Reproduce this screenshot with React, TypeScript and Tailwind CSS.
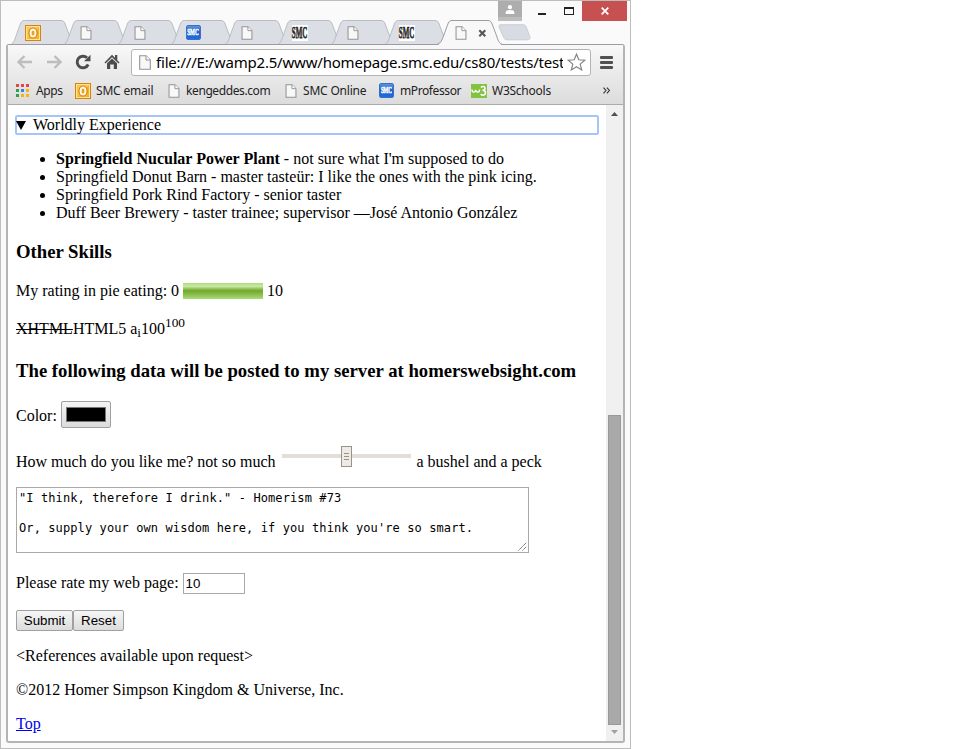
import React from "react";

type TabKind = "outlook" | "page" | "smcBlue" | "smcText";

function PageIcon({ w = 12, h = 15 }: { w?: number; h?: number }) {
  return (
    <svg width={w} height={h} viewBox="0 0 12 15" className="shrink-0">
      <path d="M.7.7H7L11.3 5v9.3H.7z" fill="#f8f8f8" stroke="#929292" strokeWidth="1.1" />
      <path d="M7 .7V5h4.3" fill="#fff" stroke="#929292" strokeWidth="1" />
    </svg>
  );
}

function OutlookIcon() {
  return (
    <svg width="16" height="16" viewBox="0 0 16 16" className="shrink-0">
      <rect x=".5" y=".5" width="15" height="15" fill="#f3b61d" stroke="#d9820f" />
      <rect x="1.5" y="1.5" width="13" height="13" fill="none" stroke="#fbe3a0" />
      <path d="M2 2h12L2 14z" fill="#fcd860" opacity=".6" />
      <ellipse cx="8" cy="8" rx="2.8" ry="3.700" fill="#e79a1a" stroke="#d9780a" strokeWidth="3.600" />
      <ellipse cx="8" cy="8" rx="2.500" ry="3.500" fill="#e8a020" stroke="#fff8e4" strokeWidth="2" />
    </svg>
  );
}

function SmcBlueIcon() {
  return (
    <div className="flex h-[15px] w-[15px] shrink-0 items-center justify-center rounded-[2px] border border-[#3c6fc4] bg-gradient-to-b from-[#5b93e0] via-[#1d5fc9] to-[#1b6fe0]">
      <span className="scale-x-[.58] font-['Liberation_Serif',serif] text-[9px] leading-none font-bold text-white [-webkit-text-stroke:0.5px_white]">SMC</span>
    </div>
  );
}

function SmcTextIcon() {
  return (
    <div className="flex h-4 w-4 shrink-0 items-center justify-center bg-white">
      <span className="scale-x-[.5] scale-y-[1.25] font-['Liberation_Serif',serif] text-[14px] leading-none font-bold text-[#2a2a2a] [-webkit-text-stroke:0.6px_#2a2a2a]">SMC</span>
    </div>
  );
}

function W3Icon() {
  return (
    <svg width="16" height="14" viewBox="0 0 16 14" className="shrink-0">
      <rect width="16" height="14" fill="#82c341" />
      <path d="M1 5.5c0 3.5 3.5 3.5 3.6.3.1 3.2 4 3.2 4-.3" fill="none" stroke="#fff" strokeWidth="1.4" />
      <path d="M10 3.5c1.2-1.6 4-1.2 4 .8 0 1.5-1.2 2-2.5 2 1.7 0 3 .7 3 2.5 0 2.5-3.2 3.2-4.7 1.2" fill="none" stroke="#fff" strokeWidth="1.6" />
    </svg>
  );
}

function TabIcon({ kind }: { kind: TabKind }) {
  if (kind === "outlook") return <OutlookIcon />;
  if (kind === "smcBlue") return <SmcBlueIcon />;
  if (kind === "smcText") return <SmcTextIcon />;
  return <PageIcon w={12} h={14} />;
}

const TABS: TabKind[] = ["outlook", "page", "page", "smcBlue", "page", "smcText", "page", "smcText"];

function TabStrip() {
  return (
    <div className="flex h-[25px] items-start pl-[10px]">
      {TABS.map((kind, i) => (
        <div key={i} className="grid h-[25px] w-[53.4px] shrink-0 items-center">
          <svg width="64" height="25" viewBox="0 0 64 25" className="col-start-1 row-start-1 overflow-visible">
            <path
              d="M0 24.5C3 23 3.5 20 5 16L9 5C10 2 11 .5 13.500 .5H50C52.500 .5 53.500 2 54.500 5L59 17C60.500 22 61.500 23.500 64 24.500Z"
              fill="#dbdfe5"
              stroke="#b9bdc2"
            />
          </svg>
          <div className="col-start-1 row-start-1 flex w-[44px] justify-center">
            <TabIcon kind={kind} />
          </div>
        </div>
      ))}
      <div className="relative z-10 grid h-[26px] w-[60px] shrink-0 items-center">
        <svg width="66" height="26" viewBox="0 0 66 26" className="col-start-1 row-start-1 overflow-visible">
          <path
            d="M-1 25.500C3 24 4 20 5.500 16L9.500 5C10.500 2 11.500 .5 14 .5H50C52.500 .5 53.500 2 54.500 5L59 17C60.500 22 61.500 24 65 25.500Z"
            fill="#f8f8f8"
          />
          <path
            d="M-1 24.500C3 23 4 20 5.500 16L9.500 5C10.500 2 11.500 .5 14 .5H50C52.500 .5 53.500 2 54.500 5L59 17C60.500 22 61.500 23.500 65 24.500"
            fill="none"
            stroke="#999da2"
          />
        </svg>
        <div className="col-start-1 row-start-1 flex items-center pl-[17px]">
          <PageIcon w={12} h={14} />
          <svg width="9" height="9" viewBox="0 0 9 9" className="ml-[11px]">
            <path d="M1.300 1.300l6 6M7.300 1.300l-6 6" stroke="#555" strokeWidth="2" />
          </svg>
        </div>
      </div>
      <svg width="33" height="18" viewBox="0 0 34 18" className="mt-[4px] overflow-visible">
        <path d="M3 .5H26c2 0 2.600 1 3.200 2.500l3.500 9.500c.8 2.300-.2 3.500-2 3.500H9.500c-2 0-3-.7-3.800-2.500L1.200 3C.5 1.200 1.200 .5 3 .5z" fill="#d7dce4" stroke="#c8ccd1" />
      </svg>
    </div>
  );
}

function WindowButtons() {
  return (
    <div className="flex h-[19px] items-start justify-end pr-[3px]">
      <div className="flex h-5 w-6 items-start justify-center border-b-4 border-[#bdbdbd] bg-[#adadad] pt-[4px]">
        <svg width="10" height="9" viewBox="0 0 10 9">
          <circle cx="5" cy="2.200" r="2.100" fill="#fff" />
          <path d="M.7 9V7.300C.7 5.700 2.500 5 5 5s4.300.7 4.300 2.300V9z" fill="#fff" />
        </svg>
      </div>
      <div className="flex h-[19px] w-[60px] items-start">
        <div className="mt-[12px] ml-4 h-[2px] w-2 bg-[#222]" />
        <div className="mt-[6px] ml-[18px] h-2 w-[10px] border border-t-2 border-[#222]" />
      </div>
      <div className="flex h-5 w-[45px] items-center justify-center bg-[#c75050]">
        <svg width="8" height="8" viewBox="0 0 8 8">
          <path d="M.7.7l6.600 6.600M7.300.7L.7 7.300" stroke="#fff" strokeWidth="1.700" />
        </svg>
      </div>
    </div>
  );
}

function AddressBar() {
  return (
    <div className="flex h-[34px] items-center">
      <svg width="16" height="14" viewBox="0 0 16 14" className="ml-[9px]">
        <path d="M7.500 1L1.500 7l6 6M1.500 7H15" fill="none" stroke="#bdbdbd" strokeWidth="2.300" />
      </svg>
      <svg width="16" height="14" viewBox="0 0 16 14" className="ml-[13px]">
        <path d="M8.500 1l6 6-6 6M14.500 7H1" fill="none" stroke="#bdbdbd" strokeWidth="2.300" />
      </svg>
      <svg width="16" height="16" viewBox="0 0 16 16" className="ml-[13px]">
        <path d="M13.200 10.500A5.800 5.800 0 1 1 12 3.800" fill="none" stroke="#4d4d4d" strokeWidth="2.900" />
        <path d="M15.500 .8v6.400H9z" fill="#4d4d4d" />
      </svg>
      <svg width="16" height="16" viewBox="0 0 16 16" className="ml-[13px]">
        <path d="M8 .8L.5 8.500l1 1L8 3.200l6.500 6.300 1-1-2.200-2.200V1H11v2.800z" fill="#4d4d4d" />
        <path d="M3 9.200L8 4.600l5 4.600V15H9.800v-4.500H6.200V15H3z" fill="#4d4d4d" />
      </svg>
      <div className="ml-[11px] flex h-[27px] w-[460px] shrink-0 items-center rounded-[3px] border border-[#b3b3b3] bg-white pl-[7px]">
        <PageIcon />
        <div className="ml-[5px] w-[407px] overflow-hidden font-['Noto_Sans',sans-serif] text-[15px] leading-6 tracking-[-0.2px] whitespace-nowrap text-black">
          file:///E:/wamp2.5/www/homepage.smc.edu/cs80/tests/test
        </div>
        <svg width="19" height="18" viewBox="0 0 19 18" className="ml-[4px]">
          <path d="M9.500 1.200l2.300 5.600 6 .4-4.600 3.900 1.500 5.800-5.200-3.200-5.200 3.200 1.500-5.800L1.200 7.200l6-.4z" fill="#fff" stroke="#848484" strokeWidth="1.200" />
        </svg>
      </div>
      <div className="ml-[9px] flex w-[13px] flex-col gap-[2px]">
        <div className="h-[3px] rounded-[1px] bg-[#505050]" />
        <div className="h-[3px] rounded-[1px] bg-[#505050]" />
        <div className="h-[3px] rounded-[1px] bg-[#505050]" />
      </div>
    </div>
  );
}

const APP_DOTS = ["#e8453c", "#e8453c", "#e8453c", "#2ba24c", "#3b80f0", "#f5b50f", "#2ba24c", "#f5b50f", "#f5b50f"];

function Bookmark({ icon, label, width, gap }: { icon: React.ReactNode; label: string; width: string; gap: string }) {
  return (
    <div className={"flex shrink-0 items-center " + width + " " + gap}>
      {icon}
      <span>{label}</span>
    </div>
  );
}

function BookmarksBar() {
  return (
    <div className="flex h-6 items-center pb-px pl-2 font-['Noto_Sans',sans-serif] text-[12px] tracking-[-0.4px] whitespace-nowrap text-[#222]">
      <Bookmark
        width="w-[59px]"
        gap="gap-[7px]"
        label="Apps"
        icon={
          <div className="grid grid-cols-3 gap-[2px]">
            {APP_DOTS.map((c, i) => (
              <div key={i} className="h-[3px] w-[3px]" style={{ backgroundColor: c }} />
            ))}
          </div>
        }
      />
      <Bookmark width="w-[93px] tracking-[-0.2px]" gap="gap-[5px]" label="SMC email" icon={<OutlookIcon />} />
      <Bookmark width="w-[117px]" gap="gap-[6px]" label="kengeddes.com" icon={<PageIcon w={12} h={14} />} />
      <Bookmark width="w-[94px] tracking-[-0.2px]" gap="gap-[6px]" label="SMC Online" icon={<PageIcon w={12} h={14} />} />
      <Bookmark width="w-[92px]" gap="gap-[6px]" label="mProfessor" icon={<SmcBlueIcon />} />
      <Bookmark width="w-[132px] tracking-[-0.25px]" gap="gap-[5px]" label="W3Schools" icon={<W3Icon />} />
      <svg width="7" height="7" viewBox="0 0 7 7">
        <path d="M.5.700l2.500 2.800L.5 6.300M3.900.700l2.500 2.800-2.500 2.800" fill="none" stroke="#333" strokeWidth="1.100" />
      </svg>
    </div>
  );
}

function Resume() {
  return (
    <div className="flex w-[598px] flex-col pl-2 font-['Liberation_Serif',serif] text-[16px] leading-[18px] whitespace-nowrap text-black">
      <div className="mt-[10px] -ml-px flex h-5 w-[584px] items-center rounded-[2px] border-2 border-[#a5c5f8]">
        <svg width="10" height="9" viewBox="0 0 10 9" className="-ml-px">
          <path d="M0 0h10L5 9z" fill="#000" />
        </svg>
        <span className="ml-[7px]">Worldly Experience</span>
      </div>
      <ul className="mt-[15px] list-disc pl-10">
        <li><b>Springfield Nucular Power Plant</b> - not sure what I'm supposed to do</li>
        <li>Springfield Donut Barn - master tasteür: I like the ones with the pink icing.</li>
        <li>Springfield Pork Rind Factory - senior taster</li>
        <li>Duff Beer Brewery - taster trainee; supervisor —José Antonio González</li>
      </ul>
      <h3 className="mt-[19px] text-[18.72px] leading-[22px] font-bold">Other Skills</h3>
      <p className="mt-[19px] flex h-[18px] items-center">
        <span>My rating in pie eating: 0</span>
        <span className="mx-1 h-4 w-20 bg-[linear-gradient(to_bottom,#a8dc78_0%,#cceaa8_20%,#79ac32_45%,#79ac32_55%,#a8dc78_100%)]" />
        <span>10</span>
      </p>
      <p className="mt-[20px] h-[18px]">
        <del>XHTML</del>HTML5 a<sub className="text-[13.33px] leading-[0]">i</sub>100<sup className="text-[13.33px] leading-[0]">100</sup>
      </p>
      <h3 className="mt-[22px] text-[18.72px] leading-[22px] font-bold">The following data will be posted to my server at homerswebsight.com</h3>
      <div className="mt-[19px] flex h-[27px] items-center">
        <span className="mt-[3px]">Color:</span>
        <button className="ml-[4px] flex h-[27px] w-[50px] items-center justify-center rounded-[2px] border border-[#a0a0a0] bg-gradient-to-b from-[#f4f4f4] to-[#dcdcdc]">
          <span className="h-[15px] w-10 border border-[#777] bg-black" />
        </button>
      </div>
      <div className="mt-[17px] flex h-[26px] items-start">
        <span className="mt-[8px]">How much do you like me? not so much</span>
        <div className="ml-[6px] flex h-[22px] w-[129px] items-center">
          <div className="h-1 w-[59px] bg-[#e3dfd8]" />
          <div className="flex h-[21px] w-[11px] flex-col items-center justify-center gap-[2px] border border-[#99938a] bg-[#eeebe7]">
            <div className="h-px w-[5px] bg-[#99938a]" />
            <div className="h-px w-[5px] bg-[#99938a]" />
            <div className="h-px w-[5px] bg-[#99938a]" />
          </div>
          <div className="h-1 w-[59px] bg-[#e3dfd8]" />
        </div>
        <span className="mt-[8px] ml-[6px]">a bushel and a peck</span>
      </div>
      <div className="mt-[16px] flex h-[66px] w-[513px] items-end border border-[#a9a9a9]">
        <div className="h-full w-[500px] pt-[3px] pl-[2px] font-['DejaVu_Sans_Mono',monospace] text-[12px] leading-[15px] tracking-[0.1px] whitespace-pre">
          {"\"I think, therefore I drink.\" - Homerism #73\n\nOr, supply your own wisdom here, if you think you're so smart."}
        </div>
        <svg width="9" height="9" viewBox="0 0 9 9" className="mb-px ml-px">
          <path d="M.5 8.500l8-8M4.500 8.500l4-4" stroke="#666" fill="none" strokeDasharray="1.400 .5" />
        </svg>
      </div>
      <div className="mt-[20px] flex h-[21px] items-center">
        <span className="-mt-px">Please rate my web page:</span>
        <div className="ml-1 flex h-[21px] w-[62px] items-center border border-[#a9a9a9] pl-[2px] font-['Liberation_Sans',sans-serif] text-[13.33px]">10</div>
      </div>
      <div className="mt-[16px] flex h-[21px] font-['Liberation_Sans',sans-serif] text-[13.33px] leading-none">
        <button className="h-[21px] w-[57px] rounded-[2px] border border-[#a0a0a0] bg-gradient-to-b from-[#f6f6f6] to-[#dcdcdc]">Submit</button>
        <button className="h-[21px] w-[51px] rounded-[2px] border border-[#a0a0a0] bg-gradient-to-b from-[#f6f6f6] to-[#dcdcdc]">Reset</button>
      </div>
      <p className="mt-[16px]">&lt;References available upon request&gt;</p>
      <p className="mt-[16px]">©2012 Homer Simpson Kingdom &amp; Universe, Inc.</p>
      <p className="mt-[16px]"><a className="text-[#0000ee] underline">Top</a></p>
    </div>
  );
}

function Scrollbar() {
  return (
    <div className="flex w-[17px] flex-col items-center bg-[#f0f0f0]">
      <svg width="7" height="4" viewBox="0 0 7 4" className="mt-[7px]">
        <path d="M0 4L3.500 0 7 4z" fill="#505050" />
      </svg>
      <div className="mt-[299px] mr-[1px] h-[310px] w-[13px] border border-[#999] bg-[#a9a9a9]" />
      <svg width="7" height="4" viewBox="0 0 7 4" className="mt-[5px]">
        <path d="M0 0h7L3.500 4z" fill="#a0a0a0" />
      </svg>
    </div>
  );
}

export default function App() {
  return (
    <div className="h-[749px] w-[960px] overflow-hidden bg-white">
      <div className="flex h-[749px] w-[631px] flex-col border border-[#bdbdbd] bg-[#fafafa]">
        <WindowButtons />
        <TabStrip />
        <div className="-mt-px mr-[5px] ml-[5px] flex h-[699px] flex-col rounded-[3px] border-2 border-t border-[#b4b4b4] border-t-[#999da2] bg-white">
          <div className="flex h-[60px] shrink-0 flex-col border-b border-[#aaa] bg-gradient-to-b from-[#f8f8f8] to-[#dcdcdc]">
            <AddressBar />
            <BookmarksBar />
          </div>
          <div className="flex min-h-0 flex-1 justify-between">
            <Resume />
            <Scrollbar />
          </div>
        </div>
      </div>
    </div>
  );
}
